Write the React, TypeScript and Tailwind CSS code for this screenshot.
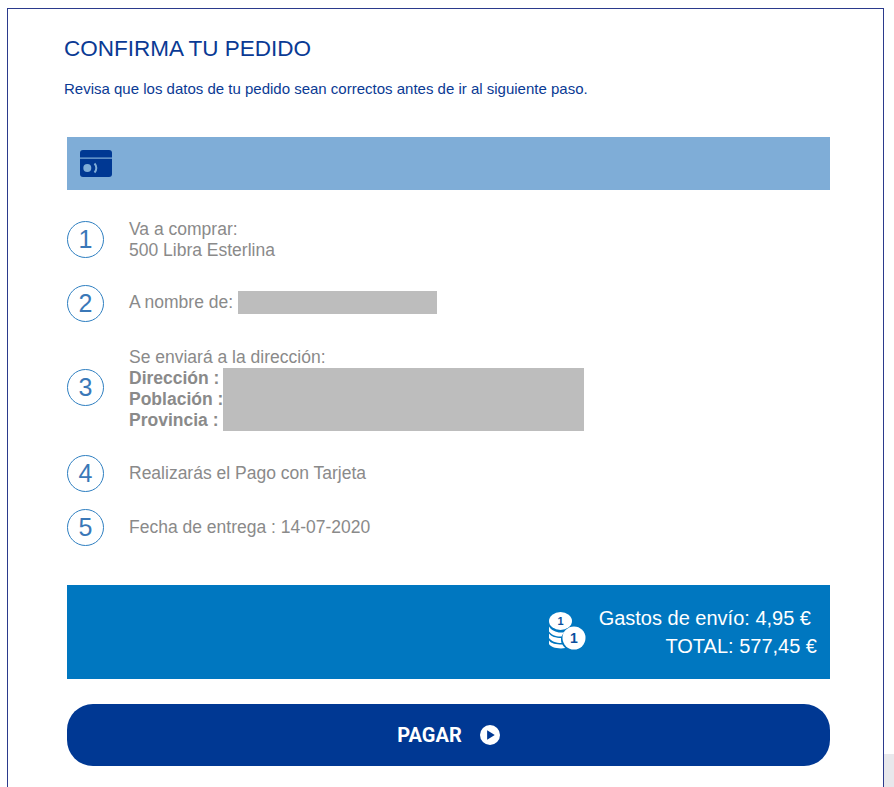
const STEP_CIRCLE =
  'flex h-[37px] w-[37px] shrink-0 items-center justify-center rounded-full border border-[#2f7fc1] text-[25px] text-[#3a78b8]'

function CardIcon() {
  return (
    <svg width="32" height="27" viewBox="0 0 32 27" className="block">
      <path d="M3 0h26a3 3 0 0 1 3 3v4.500H0V3a3 3 0 0 1 3-3z" fill="#003893" />
      <path d="M0 8.700h32V24a3 3 0 0 1-3 3H3a3 3 0 0 1-3-3z" fill="#003893" />
      <circle cx="7.300" cy="18" r="4" fill="#7fadd7" />
      <path d="M14.500 13.500a6.500 6.500 0 0 1 0 9" fill="none" stroke="#7fadd7" strokeWidth="2" />
    </svg>
  )
}

function CoinsIcon() {
  return (
    <svg width="38" height="40" viewBox="0 0 38 40" className="block">
      <ellipse cx="12.500" cy="9" rx="11.500" ry="9" fill="#fff" />
      <text x="12.500" y="13" textAnchor="middle" fontSize="11" fontWeight="700" fill="#0a4f9e" fontFamily="'Liberation Sans', sans-serif">
        1
      </text>
      <path d="M1 14.500c2 3.500 7 6 11.500 6 1.500 0 3-.2 4.500-.6-1.500 1.100-2.700 2.500-3.500 4.600-.4 0-.7 0-1 0-5 0-9.500-2-11.500-5z" fill="#fff" />
      <path d="M1 21.500c2 3 7 4.500 12 4.500 0 1.500 0 3.500.5 5-5.500 0-10.500-2-12.500-5z" fill="#fff" />
      <path d="M1 28.500c2 3 7 4 13.300 4 .7 1.300 1.700 2.500 2.900 3.500-1.300.3-2.700.4-4.200.4C7 36.400 2.500 34.500 1 32z" fill="#fff" />
      <circle cx="26" cy="26" r="11.500" fill="#fff" />
      <text x="26" y="31" textAnchor="middle" fontSize="14" fontWeight="700" fill="#0a4f9e" fontFamily="'Liberation Sans', sans-serif">
        1
      </text>
    </svg>
  )
}

function PlayIcon() {
  return (
    <svg width="20" height="20" viewBox="0 0 21 21" className="block">
      <circle cx="10.500" cy="10.500" r="10.500" fill="#fff" />
      <path d="M7.500 5.500l8 5-8 5z" fill="#003893" />
    </svg>
  )
}

export default function App() {
  return (
    <div className="flex h-[787px] w-[894px] overflow-hidden bg-white font-['Liberation_Sans',Arial,sans-serif]">
      <div className="ml-[7px] mt-[8px] h-[779px] w-[877px] shrink-0 border-x border-t border-[#2b3a8c] pl-[56px] pt-[26px]">
        <h1 className="text-[22.5px] leading-[28px] text-[#0a3a94]">CONFIRMA TU PEDIDO</h1>
        <p className="mt-[17px] text-[15px] leading-[18px] text-[#0a3a94]">
          Revisa que los datos de tu pedido sean correctos antes de ir al siguiente paso.
        </p>

        <div className="ml-[3px] mt-[39px] flex h-[53px] w-[763px] items-center bg-[#7fadd7] pl-[13px]">
          <CardIcon />
        </div>

        <div className="ml-[3px] text-[17.5px] leading-[21px] text-[#8a8a8a]">
          <div className="mt-[29px] flex items-center">
            <div className={`${STEP_CIRCLE} mb-[2px]`}>1</div>
            <div className="ml-[25px]">
              <div>Va a comprar:</div>
              <div>500 Libra Esterlina</div>
            </div>
          </div>

          <div className="mt-[22px] flex items-center">
            <div className={`${STEP_CIRCLE} mt-[2px]`}>2</div>
            <div className="ml-[25px]">A nombre de:</div>
            <div className="ml-[5px] h-[23px] w-[199px] bg-[#bdbdbd]" />
          </div>

          <div className="mt-[25px] flex items-center">
            <div className={`${STEP_CIRCLE} mb-[3px]`}>3</div>
            <div className="ml-[25px]">
              <div>Se enviará a la dirección:</div>
              <div className="flex">
                <div className="font-bold">
                  <div>Dirección :</div>
                  <div>Población :</div>
                  <div>Provincia :</div>
                </div>
                <div className="h-[63px] w-[361px] bg-[#bdbdbd]" />
              </div>
            </div>
          </div>

          <div className="mt-[24px] flex items-center">
            <div className={STEP_CIRCLE}>4</div>
            <div className="ml-[25px]">Realizarás el Pago con Tarjeta</div>
          </div>

          <div className="mt-[17px] flex items-center">
            <div className={STEP_CIRCLE}>5</div>
            <div className="ml-[25px]">Fecha de entrega : 14-07-2020</div>
          </div>
        </div>

        <div className="ml-[3px] mt-[39px] flex h-[94px] w-[763px] items-center justify-end bg-[#0077c0] pr-[13px] text-[20px] leading-[28px] text-white">
          <CoinsIcon />
          <div className="ml-[13px] text-right">
            <div className="pr-[6px]">Gastos de envío: 4,95 €</div>
            <div>TOTAL: 577,45 €</div>
          </div>
        </div>

        <div className="ml-[3px] mt-[25px] flex h-[62px] w-[763px] items-center justify-center gap-[18px] rounded-[26px] bg-[#003893] font-['Roboto',sans-serif] text-[20px] font-bold text-white">
          <span>PAGAR</span>
          <PlayIcon />
        </div>
      </div>

      <div className="flex flex-1 flex-col justify-end">
        <div className="h-[33px] bg-[#e8e8ec]" />
      </div>
    </div>
  )
}
